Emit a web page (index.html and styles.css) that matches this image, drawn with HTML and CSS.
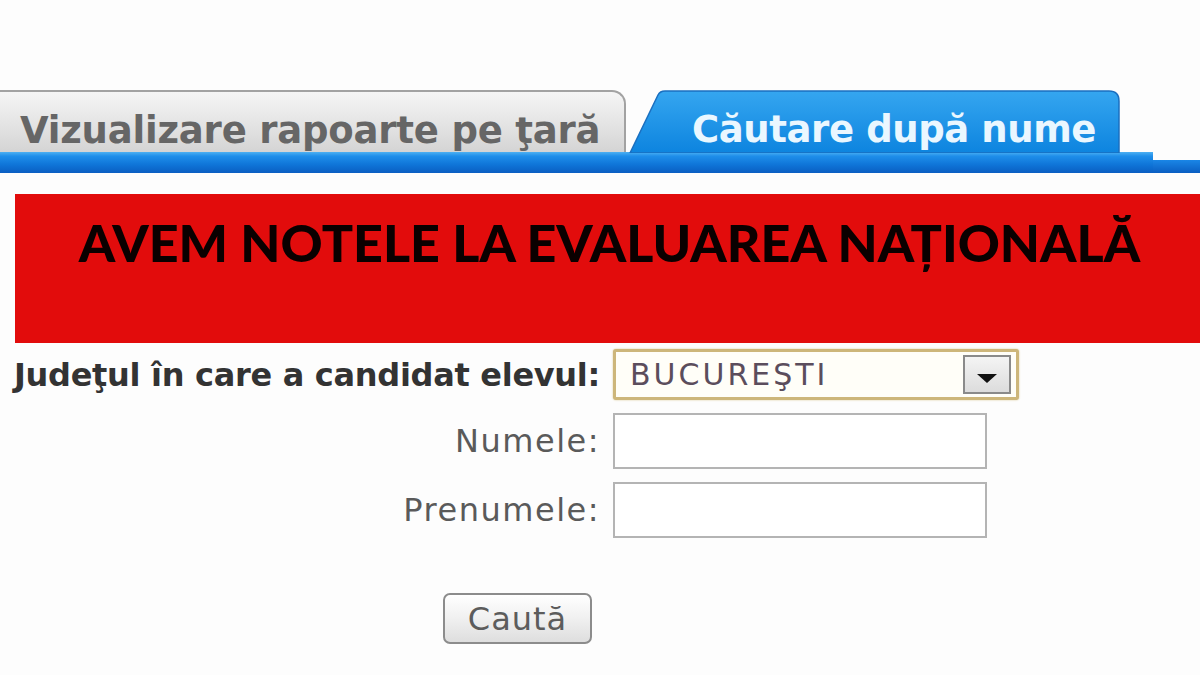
FILE: index.html
```html
<!DOCTYPE html>
<html lang="ro">
<head>
  <meta charset="UTF-8" />
  <title>Evaluarea Națională</title>
  <link rel="stylesheet" href="styles.css">
</head>
<body>

  <!-- TABS -->
  <div class="tabs">
    <div class="tab-row">
      <div class="tab tab-off">Vizualizare rapoarte pe ţară</div>
      <div class="tab tab-on">
        <svg class="tab-shape" width="495" height="63" viewBox="0 0 495 63">
          <defs>
            <linearGradient id="tabBlue" x1="0" y1="0" x2="0" y2="1">
              <stop offset="0" stop-color="#35a6f0"/>
              <stop offset="1" stop-color="#0d84df"/>
            </linearGradient>
          </defs>
          <path d="M1,63 L29,5 Q31,1 36,1 L480,1 Q490,1 490,11 L490,63 Z" fill="url(#tabBlue)" stroke="#1a6fc0" stroke-width="1.5"/>
        </svg>
        <span class="tab-label">Căutare după nume</span>
      </div>
    </div>
    <div class="tab-strip">
      <div class="strip-main"></div>
      <div class="strip-rest"></div>
    </div>
  </div>

  <!-- BANNER -->
  <div class="banner">
    <h1>AVEM NOTELE LA EVALUAREA NAȚIONALĂ</h1>
  </div>

  <!-- SEARCH FORM -->
  <div class="search-form">
    <label class="lbl lbl-main">Judeţul în care a candidat elevul:</label>
    <div class="select">
      <span class="select-value">BUCUREŞTI</span>
      <span class="select-btn"><span class="arrow"></span></span>
    </div>

    <label class="lbl">Numele:</label>
    <div class="field"></div>

    <label class="lbl">Prenumele:</label>
    <div class="field"></div>

    <div class="actions">
      <button class="btn">Caută</button>
    </div>
  </div>

</body>
</html>
```

FILE: styles.css
```css
body {
  margin: 0;
  background: #fdfdfd;
  font-family: "DejaVu Sans", Verdana, sans-serif;
  overflow: hidden;
}

/* Tabs */
.tabs {
  padding-top: 90px;
}

.tab-row {
  display: flex;
  align-items: flex-end;
  height: 62px;
}

.tab {
  height: 62px;
  box-sizing: border-box;
  font-weight: bold;
  font-size: 37px;
  line-height: 1;
  white-space: nowrap;
}

.tab-off {
  width: 628px;
  margin-left: -2px;
  padding: 20px 0 0 20px;
  background: linear-gradient(#f5f5f5, #e2e2e2 60%, #d4d4d4);
  border: 2px solid #a2a2a2;
  border-bottom: none;
  border-radius: 0 14px 0 0;
  color: #666;
  letter-spacing: -0.2px;
}

.tab-on {
  position: relative;
  width: 495px;
  margin-left: 3px;
  padding: 21px 0 0 63px;
  color: #eaf7ff;
}

.tab-shape {
  position: absolute;
  left: 0;
  top: 0;
}

.tab-label {
  position: relative;
  letter-spacing: -0.4px;
}

.tab-strip {
  display: flex;
  align-items: flex-end;
}

.strip-main {
  width: 1153px;
  height: 21px;
  background: linear-gradient(#4db0f2, #1e8eea 20%, #0f75d8 60%, #0a5ec2);
}

.strip-rest {
  flex: 1;
  height: 13px;
  background: linear-gradient(#1a86e6, #0a5ec2);
}

/* Banner */
.banner {
  margin: 21px 0 0 15px;
  height: 149px;
  box-sizing: border-box;
  padding-top: 22px;
  background: #e20c0c;
  text-align: center;
}

.banner h1 {
  margin: 0;
  font-family: Lato, "Open Sans", sans-serif;
  font-weight: 900;
  font-size: 52px;
  line-height: 1;
  color: #0a0000;
  padding-left: 4px;
}

/* Form */
.search-form {
  display: grid;
  grid-template-columns: 600px 406px;
  grid-auto-rows: auto;
  align-items: center;
  row-gap: 13px;
  column-gap: 13px;
  margin-top: 6px;
}

.lbl {
  text-align: right;
  font-size: 32px;
  letter-spacing: 1.5px;
  color: #5a5a5a;
  white-space: nowrap;
}

.lbl-main {
  font-weight: bold;
  color: #333;
  letter-spacing: -0.3px;
}

.select {
  display: flex;
  align-items: center;
  justify-content: space-between;
  height: 51px;
  box-sizing: border-box;
  padding: 0 5px 0 14px;
  border: 3px solid #cdb67a;
  border-radius: 3px;
  background: #fffef8;
  box-shadow: 0 0 2px #d8c48e;
}

.select-value {
  font-size: 30px;
  letter-spacing: 3px;
  color: #5b4d5c;
}

.select-btn {
  display: flex;
  align-items: center;
  justify-content: center;
  width: 48px;
  height: 39px;
  box-sizing: border-box;
  border: 2px solid #8a8a8a;
  background: linear-gradient(#f4f4f4, #dcdcdc);
}

.arrow {
  width: 0;
  height: 0;
  margin-top: 8px;
  border-left: 10px solid transparent;
  border-right: 10px solid transparent;
  border-top: 9px solid #111;
}

.field {
  width: 374px;
  height: 56px;
  box-sizing: border-box;
  border: 2px solid #b4b4b4;
  background: #fff;
}

.actions {
  grid-column: 1 / -1;
  padding: 42px 0 0 443px;
}

.btn {
  width: 149px;
  height: 51px;
  padding: 0;
  font-family: "DejaVu Sans", Verdana, sans-serif;
  font-size: 32px;
  letter-spacing: 1px;
  color: #5c5c5c;
  border: 2px solid #8c8c8c;
  border-radius: 7px;
  background: linear-gradient(#ffffff, #f0f0f0 50%, #dedede);
}
```
